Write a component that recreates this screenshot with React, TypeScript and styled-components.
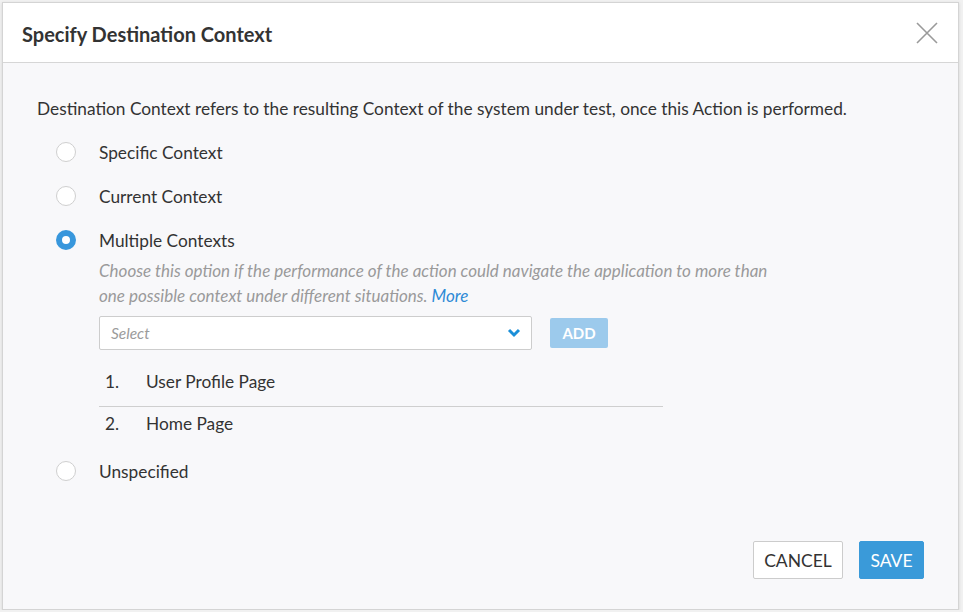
import * as React from 'react';
import styled, { createGlobalStyle } from 'styled-components';

const GlobalStyle = createGlobalStyle`
  html, body {
    margin: 0;
    padding: 0;
    background: #f1f1f1;
    font-family: Lato, "Open Sans", "Liberation Sans", sans-serif;
    color: #333;
  }
`;

const Dialog = styled.div`
  box-sizing: border-box;
  margin: 2px 0 0 2px;
  width: 957px;
  height: 608px;
  display: flex;
  flex-direction: column;
  background: #f8f8fa;
  border: 1px solid #d4d4d4;
  box-shadow: 0 1px 3px rgba(0, 0, 0, 0.12);
`;

const Header = styled.div`
  height: 59px;
  flex-shrink: 0;
  display: flex;
  align-items: center;
  justify-content: space-between;
  padding: 0 20px 0 19px;
  background: #fff;
  border-bottom: 1px solid #d6d6d6;
`;

const Title = styled.h2`
  margin: 0;
  padding-top: 3px;
  font-size: 20px;
  font-weight: 700;
  color: #333;
`;

const CloseButton = styled.button`
  border: none;
  background: none;
  padding: 0;
  width: 22px;
  height: 22px;
  cursor: pointer;
  margin-top: 1px;
`;

const Body = styled.div`
  flex: 1;
  display: flex;
  flex-direction: column;
  padding: 34px 34px 30px 34px;
`;

const Intro = styled.p`
  margin: 0 0 9px 0;
  font-size: 17.3px;
  line-height: 24px;
`;

const OptionRow = styled.label`
  display: flex;
  align-items: center;
  height: 44px;
  font-size: 17.3px;
  cursor: pointer;
`;

const Radio = styled.span<{ checked?: boolean }>`
  box-sizing: border-box;
  width: 20px;
  height: 20px;
  border-radius: 50%;
  margin: 0 23px 0 19px;
  background: #fff;
  border: ${(p) => (p.checked ? '6px solid #3897dc' : '1px solid #cfcfcf')};
`;

const Nested = styled.div`
  margin: -4px 0 0 62px;
`;

const Help = styled.p`
  margin: 0;
  font-size: 17px;
  line-height: 25px;
  font-style: italic;
  color: #9a9a9a;
  width: 676px;
`;

const MoreLink = styled.a`
  color: #2d8ad6;
  text-decoration: none;
`;

const PickerRow = styled.div`
  display: flex;
  align-items: center;
  gap: 18px;
  margin-top: 8px;
`;

const SelectBox = styled.div`
  box-sizing: border-box;
  width: 433px;
  height: 34px;
  display: flex;
  align-items: center;
  justify-content: space-between;
  padding: 0 10px 0 11px;
  background: #fff;
  border: 1px solid #cdcdcd;
  border-radius: 2px;
  font-size: 15.5px;
  font-style: italic;
  color: #9b9b9b;
`;

const AddButton = styled.button`
  height: 30px;
  width: 58px;
  border: none;
  border-radius: 2px;
  background: #9ccaec;
  color: #fff;
  font-family: inherit;
  font-size: 15px;
  font-weight: 700;
  padding: 0;
`;

const ContextList = styled.ol`
  list-style: none;
  margin: 14px 0 0 0;
  padding: 0;
  width: 564px;
`;

const ContextItem = styled.li`
  display: flex;
  font-size: 17.3px;
  line-height: 24px;
  padding: 6px 0 12px 6px;
  & + & {
    border-top: 1px solid #cfcfcf;
    padding-top: 5px;
    padding-bottom: 13px;
  }
`;

const ItemNumber = styled.span`
  width: 41px;
`;

const Footer = styled.div`
  margin-top: auto;
  display: flex;
  justify-content: flex-end;
  gap: 16px;
`;

const FooterButton = styled.button<{ primary?: boolean }>`
  box-sizing: border-box;
  height: 38px;
  padding: 0;
  width: ${(p) => (p.primary ? '65px' : '90px')};
  border-radius: 2px;
  font-family: inherit;
  font-size: 17.5px;
  border: 1px solid ${(p) => (p.primary ? '#3a9ad9' : '#cccccc')};
  background: ${(p) => (p.primary ? '#3a9ad9' : '#fff')};
  color: ${(p) => (p.primary ? '#fff' : '#333')};
`;

const options = ['Specific Context', 'Current Context', 'Multiple Contexts', 'Unspecified'];
const contexts = ['User Profile Page', 'Home Page'];

export default function App() {
  const selected = 'Multiple Contexts';
  return (
    <>
      <GlobalStyle />
      <Dialog>
        <Header>
          <Title>Specify Destination Context</Title>
          <CloseButton aria-label="Close">
            <svg width="22" height="22" viewBox="0 0 22 22">
              <path d="M1 1 L21 21 M21 1 L1 21" stroke="#9a9a9a" strokeWidth="1.6" fill="none" />
            </svg>
          </CloseButton>
        </Header>
        <Body>
          <Intro>
            Destination Context refers to the resulting Context of the system under test, once this Action is performed.
          </Intro>
          {options.map((o) => (
            <React.Fragment key={o}>
              <OptionRow>
                <Radio checked={o === selected} />
                {o}
              </OptionRow>
              {o === selected && (
                <Nested>
                  <Help>
                    Choose this option if the performance of the action could navigate the application to more than
                    one possible context under different situations. <MoreLink href="#">More</MoreLink>
                  </Help>
                  <PickerRow>
                    <SelectBox>
                      Select
                      <svg width="14" height="10" viewBox="0 0 14 10">
                        <polyline points="2,2 7,7 12,2" stroke="#1b8fd8" strokeWidth="3" fill="none" />
                      </svg>
                    </SelectBox>
                    <AddButton>ADD</AddButton>
                  </PickerRow>
                  <ContextList>
                    {contexts.map((c, i) => (
                      <ContextItem key={c}>
                        <ItemNumber>{i + 1}.</ItemNumber>
                        {c}
                      </ContextItem>
                    ))}
                  </ContextList>
                </Nested>
              )}
            </React.Fragment>
          ))}
          <Footer>
            <FooterButton>CANCEL</FooterButton>
            <FooterButton primary>SAVE</FooterButton>
          </Footer>
        </Body>
      </Dialog>
    </>
  );
}
